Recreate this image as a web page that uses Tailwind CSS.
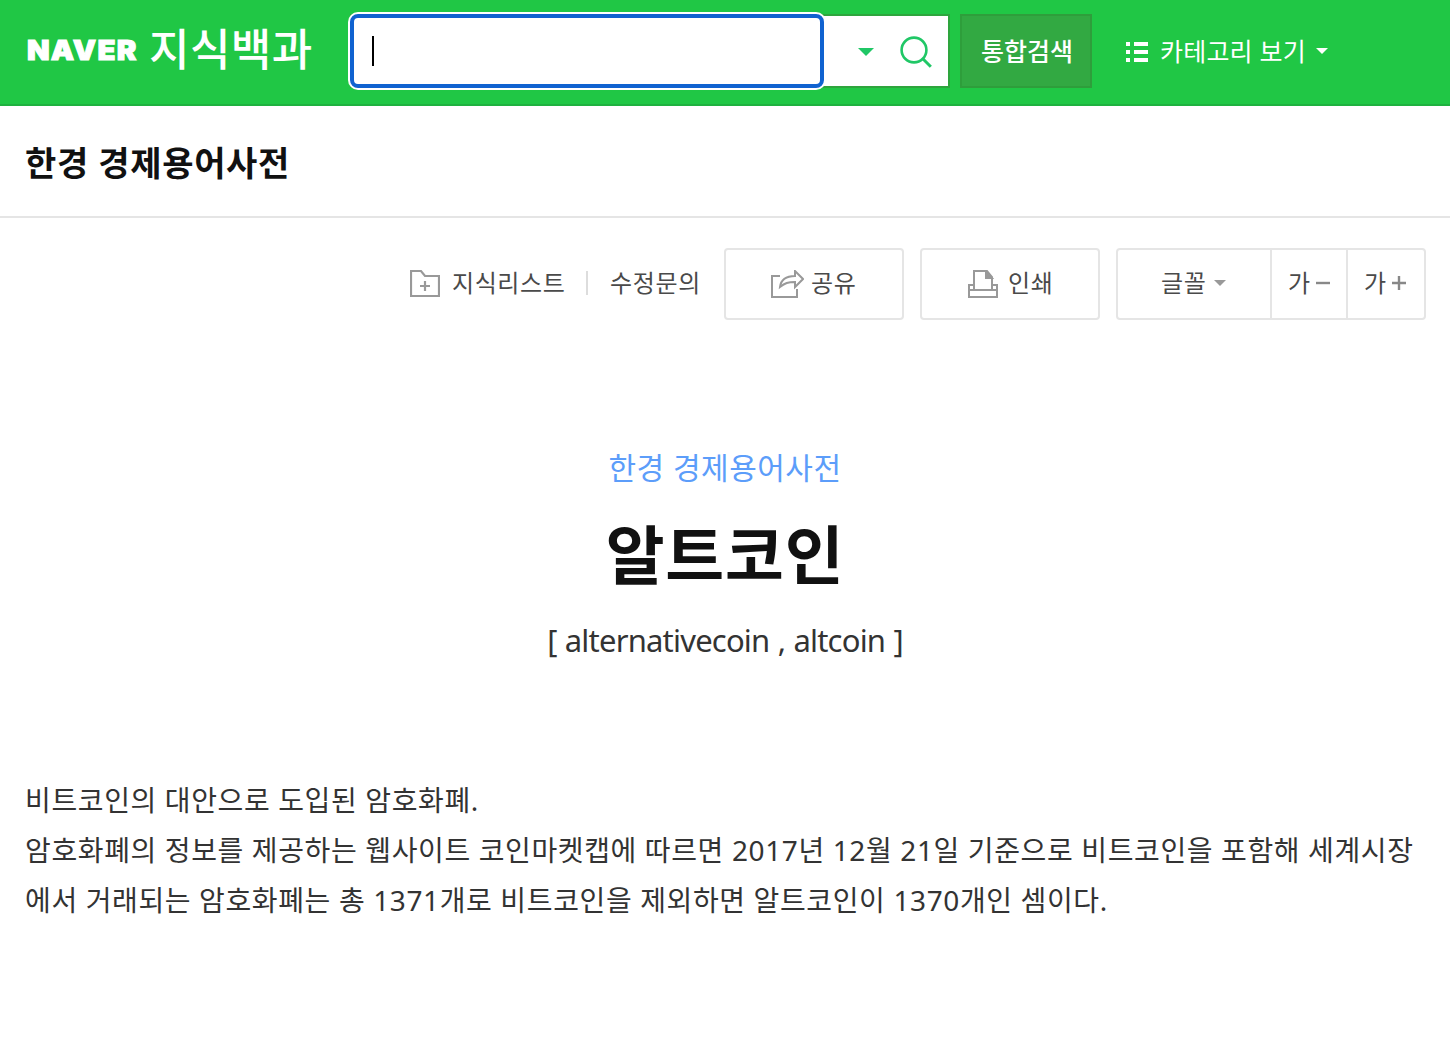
<!DOCTYPE html>
<html lang="ko">
<head>
  <meta charset="UTF-8">
  <meta name="viewport" content="width=device-width, initial-scale=1.0">
  <title>알트코인 - 네이버 지식백과</title>
  <script src="https://cdn.jsdelivr.net/npm/@tailwindcss/browser@4"></script>
</head>
<body class="bg-white min-h-screen font-['Noto_Sans','Noto_Sans_CJK_KR',sans-serif] text-[#333]">
  <!-- Header -->
  <header class="h-[106px] bg-[#20c745] border-b-2 border-[#1fb13f] flex items-start pl-[27px] pt-3.5 text-white">
    <a href="#" class="w-[323px] h-[72px] flex items-center whitespace-nowrap">
      <span class="w-[122px] origin-left scale-x-[1.09] font-['Inter',sans-serif] font-black text-[27px] leading-none tracking-[1.1px] [-webkit-text-stroke:1px_white]">NAVER</span>
      <span class="text-[44px] leading-[72px] tracking-[0.4px] font-medium -mt-0.5">지식백과</span>
    </a>
    <form class="w-[600px] h-[74px] bg-white border-2 border-[#2ea53d] flex items-center">
      <div class="w-[474px] h-[74px] shrink-0 -ml-0.5 bg-white border-4 border-[#1062d0] rounded-lg ring-2 ring-white flex items-center pl-[18px]">
        <span class="w-0.5 h-[30px] bg-black"></span>
      </div>
      <svg class="w-4 h-2 ml-[34px] mt-0.5" viewBox="0 0 16 8" fill="#20c766"><path d="M0 0h16L8 8z"/></svg>
      <svg class="w-8 h-8 ml-[26px] mt-0.5" viewBox="0 0 32 32" fill="none" stroke="#20c766" stroke-width="2.6"><circle cx="14" cy="14" r="12.4"/><path d="M22.8 22.8l8 8" stroke-width="3"/></svg>
    </form>
    <button type="button" class="w-[132px] h-[74px] ml-2.5 pt-0.5 pl-0.5 bg-[#32a942] border-2 border-[#2e9e3b] text-[25px] font-medium whitespace-nowrap">통합검색</button>
    <button type="button" class="h-[74px] ml-[34px] pt-0.5 flex items-center whitespace-nowrap">
      <svg class="w-[22px] h-5" viewBox="0 0 22 20" fill="white" shape-rendering="crispEdges"><path d="M0 0h4v4H0zM8 0h14v4H8zM0 8h4v4H0zM8 8h14v4H8zM0 16h4v4H0zM8 16h14v4H8z"/></svg>
      <span class="ml-3 w-[156px] text-left text-[25px] tracking-[0.2px]">카테고리 보기</span>
      <svg class="w-3 h-1.5 -mt-0.5" viewBox="0 0 12 6" fill="white"><path d="M0 0h12L6 6z"/></svg>
    </button>
  </header>

  <!-- Dictionary name -->
  <div class="h-28 border-b-2 border-[#e5e5e5] flex items-center pl-[25px] pt-1">
    <h2 class="text-[34px] font-bold tracking-[0.65px] text-[#111]">한경 경제용어사전</h2>
  </div>

  <!-- Tools -->
  <div class="mt-[30px] h-[72px] pr-6 flex items-center justify-end text-2xl text-[#4a4a4a] whitespace-nowrap">
    <svg class="w-[30px] h-7 -mt-0.5" viewBox="0 0 30 28" fill="none" stroke="#999" stroke-width="2.2"><path d="M1 27V2h10l4 5h14v20zM15 12v10M10 17h10"/></svg>
    <span class="ml-3 w-[134px] -mt-0.5 tracking-[0.6px]">지식리스트</span>
    <span class="w-0.5 h-6 -mt-0.5 bg-[#ddd]"></span>
    <span class="ml-[22px] w-[114px] -mt-0.5 tracking-[0.7px]">수정문의</span>
    <button type="button" class="w-[180px] h-[72px] border-2 border-[#e5e5e5] rounded flex items-center pl-11">
      <svg class="w-[34px] h-[28px]" viewBox="0 0 34 28" fill="none" stroke="#999" stroke-width="2"><path d="M10 6H2v21h25v-8"/><path d="M10 17c1-8 7-11 15-11V1l8 8-8 8v-5c-7 0-10 1-15 5z"/></svg>
      <span class="ml-[7px] -mt-0.5 tracking-[0.6px]">공유</span>
    </button>
    <button type="button" class="ml-4 w-[180px] h-[72px] border-2 border-[#e5e5e5] rounded flex items-center pl-[46px]">
      <svg class="w-[30px] h-[28px]" viewBox="0 0 30 28" fill="none" stroke="#999" stroke-width="2"><path d="M6 20V1h13l5 6v13M1 27h28v-7H1zM1 20v-5h5M24 15h5v5"/><path d="M18 1v7h6z" fill="#999"/></svg>
      <span class="ml-2.5 -mt-0.5 tracking-[0.6px]">인쇄</span>
    </button>
    <div class="ml-4 w-[310px] h-[72px] border-2 border-[#e5e5e5] rounded flex">
      <button type="button" class="w-[154px] border-r-2 border-[#e5e5e5] flex items-center pl-[43px] pb-0.5">
        <span class="w-[53px] text-left tracking-[0.6px]">글꼴</span>
        <svg class="w-3 h-1.5" viewBox="0 0 12 6" fill="#999"><path d="M0 0h12L6 6z"/></svg>
      </button>
      <button type="button" class="w-[76px] border-r-2 border-[#e5e5e5] flex items-center pl-4 pb-0.5">
        <span class="w-7 text-left">가</span>
        <svg class="w-3.5 h-3.5" viewBox="0 0 14 14" stroke="#888" stroke-width="2.4"><path d="M0 7h14"/></svg>
      </button>
      <button type="button" class="w-[76px] flex items-center pl-4 pb-0.5">
        <span class="w-7 text-left">가</span>
        <svg class="w-3.5 h-3.5" viewBox="0 0 14 14" stroke="#888" stroke-width="2.4"><path d="M0 7h14M7 0v14"/></svg>
      </button>
    </div>
  </div>

  <!-- Entry title -->
  <div class="mt-[124px] flex flex-col items-center whitespace-nowrap">
    <a href="#" class="text-[30px] leading-[48px] tracking-[0.5px] text-[#5c9dfa]">한경 경제용어사전</a>
    <h1 class="mt-[15px] text-[64px] leading-[96px] tracking-[0.8px] font-bold text-[#111]">알트코인</h1>
    <p class="mt-[13px] text-[31px] leading-[48px] tracking-[-0.8px] [word-spacing:1px]">[ alternativecoin , altcoin ]</p>
  </div>

  <!-- Description -->
  <div class="mt-[111px] pl-[25px] text-[28px] leading-[50px] tracking-[0.62px] whitespace-nowrap">
    <p>비트코인의 대안으로 도입된 암호화폐.</p>
    <p>암호화폐의 정보를 제공하는 웹사이트 코인마켓캡에 따르면 2017년 12월 21일 기준으로 비트코인을 포함해 세계시장<br>에서 거래되는 암호화폐는 총 1371개로 비트코인을 제외하면 알트코인이 1370개인 셈이다.</p>
  </div>
</body>
</html>
